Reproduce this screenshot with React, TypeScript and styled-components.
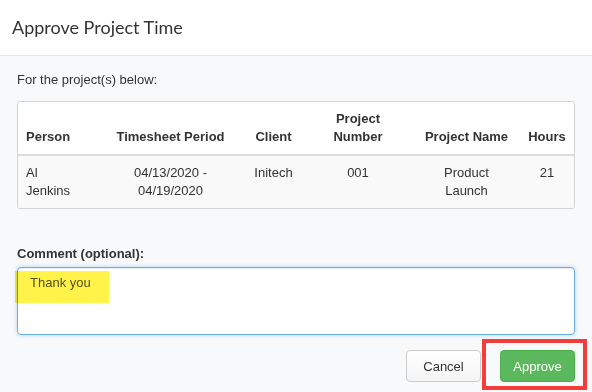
import React from 'react';
import styled, { createGlobalStyle } from 'styled-components';

const GlobalStyle = createGlobalStyle`
    html, body {
        margin: 0;
        padding: 0;
        background: #f8f9fb;
    }
    body {
        font-family: 'Liberation Sans', Arial, sans-serif;
        color: #333;
    }
`;

const Dialog = styled.div`
    width: 592px;
    height: 392px;
    position: relative;
    overflow: hidden;
    background: #f8f9fb;
`;

const Header = styled.div`
    height: 56px;
    box-sizing: border-box;
    background: #fff;
    border-bottom: 1px solid #e5e5e5;
    display: flex;
    align-items: center;
    padding: 0 12px 2px;
`;

const Title = styled.h4`
    margin: 0;
    font-family: Lato, 'Open Sans', sans-serif;
    font-size: 18px;
    font-weight: 400;
    color: #333;
`;

const Body = styled.div`
    padding: 15px 17px 0;
`;

const Intro = styled.p`
    margin: 0 0 12px;
    font-size: 13px;
    line-height: 18px;
`;

const TableWrap = styled.div`
    border: 1px solid #d4d4d4;
    border-radius: 3px;
    overflow: hidden;
    background: #fff;
`;

const Table = styled.table`
    width: 100%;
    table-layout: fixed;
    border-collapse: collapse;
    font-size: 13px;
    line-height: 18px;
`;

const HeadCell = styled.th<{ $align?: string; $padLeft?: number; $padRight?: number }>`
    vertical-align: bottom;
    text-align: ${({ $align }) => $align || 'center'};
    padding: 8px ${({ $padRight }) => $padRight ?? 8}px 8px ${({ $padLeft }) => $padLeft ?? 8}px;
    font-weight: 700;
    border-bottom: 2px solid #ddd;
    background: #fff;
`;

const Cell = styled.td<{ $align?: string; $padLeft?: number; $padRight?: number }>`
    vertical-align: top;
    text-align: ${({ $align }) => $align || 'center'};
    padding: 8px ${({ $padRight }) => $padRight ?? 8}px 8px ${({ $padLeft }) => $padLeft ?? 8}px;
    background: #f9f9f9;
`;

const Label = styled.label`
    display: block;
    margin: 36px 0 4px;
    font-size: 13px;
    line-height: 18px;
    font-weight: 700;
`;

const FieldWrap = styled.div`
    position: relative;
`;

const Comment = styled.textarea`
    display: block;
    width: 100%;
    height: 68px;
    box-sizing: border-box;
    margin: 0;
    padding: 6px 12px;
    resize: none;
    font-family: 'Liberation Sans', Arial, sans-serif;
    font-size: 13px;
    line-height: 18px;
    color: #555;
    background: #fff;
    border: 1px solid #66afe9;
    border-radius: 4px;
    outline: none;
    box-shadow: inset 0 1px 1px rgba(0, 0, 0, 0.075), 0 0 4px rgba(102, 175, 233, 0.5);
`;

const Highlight = styled.div`
    position: absolute;
    left: -2px;
    top: 4px;
    width: 94px;
    height: 32px;
    background: #fff34a;
    mix-blend-mode: multiply;
    pointer-events: none;
`;

const Footer = styled.div`
    display: flex;
    justify-content: flex-end;
    gap: 19px;
    margin-top: 15px;
`;

const Button = styled.button<{ $primary?: boolean }>`
    width: 75px;
    height: 32px;
    box-sizing: border-box;
    padding: 0;
    font-family: 'Liberation Sans', Arial, sans-serif;
    font-size: 13px;
    border-radius: 4px;
    cursor: pointer;
    color: ${({ $primary }) => ($primary ? '#fff' : '#333')};
    background: ${({ $primary }) => ($primary ? '#5cb85c' : 'linear-gradient(#fff, #f4f4f4)')};
    border: 1px solid ${({ $primary }) => ($primary ? '#4cae4c' : '#ccc')};
`;

const Marker = styled.div`
    position: absolute;
    left: 482px;
    top: 339px;
    width: 105px;
    height: 51px;
    box-sizing: border-box;
    border: 4px solid #f23d3d;
    pointer-events: none;
`;

interface Column {
    title: string;
    width: number;
    align?: string;
    padLeft?: number;
    padRight?: number;
}

const columns: Column[] = [
    { title: 'Person', width: 62, align: 'left' },
    { title: 'Timesheet Period', width: 151, padLeft: 32, padRight: 2 },
    { title: 'Client', width: 85 },
    { title: 'Project Number', width: 84 },
    { title: 'Project Name', width: 120, padLeft: 21 },
    { title: 'Hours', width: 54 },
];

const rows = [['Al Jenkins', '04/13/2020 - 04/19/2020', 'Initech', '001', 'Product Launch', '21']];

export default function App() {
    return (
        <Dialog>
            <GlobalStyle />
            <Header>
                <Title>Approve Project Time</Title>
            </Header>
            <Body>
                <Intro>For the project(s) below:</Intro>
                <TableWrap>
                    <Table>
                        <colgroup>
                            {columns.map(c => (
                                <col key={c.title} style={{ width: c.width }} />
                            ))}
                        </colgroup>
                        <thead>
                            <tr>
                                {columns.map(c => (
                                    <HeadCell
                                        key={c.title}
                                        $align={c.align}
                                        $padLeft={c.padLeft}
                                        $padRight={c.padRight}
                                    >
                                        {c.title}
                                    </HeadCell>
                                ))}
                            </tr>
                        </thead>
                        <tbody>
                            {rows.map(row => (
                                <tr key={row[0]}>
                                    {row.map((value, i) => (
                                        <Cell
                                            key={i}
                                            $align={columns[i].align}
                                            $padLeft={columns[i].padLeft}
                                            $padRight={columns[i].padRight}
                                        >
                                            {value}
                                        </Cell>
                                    ))}
                                </tr>
                            ))}
                        </tbody>
                    </Table>
                </TableWrap>
                <Label htmlFor="comment">Comment (optional):</Label>
                <FieldWrap>
                    <Comment id="comment" defaultValue="Thank you" />
                    <Highlight />
                </FieldWrap>
                <Footer>
                    <Button>Cancel</Button>
                    <Button $primary>Approve</Button>
                </Footer>
            </Body>
            <Marker />
        </Dialog>
    );
}
